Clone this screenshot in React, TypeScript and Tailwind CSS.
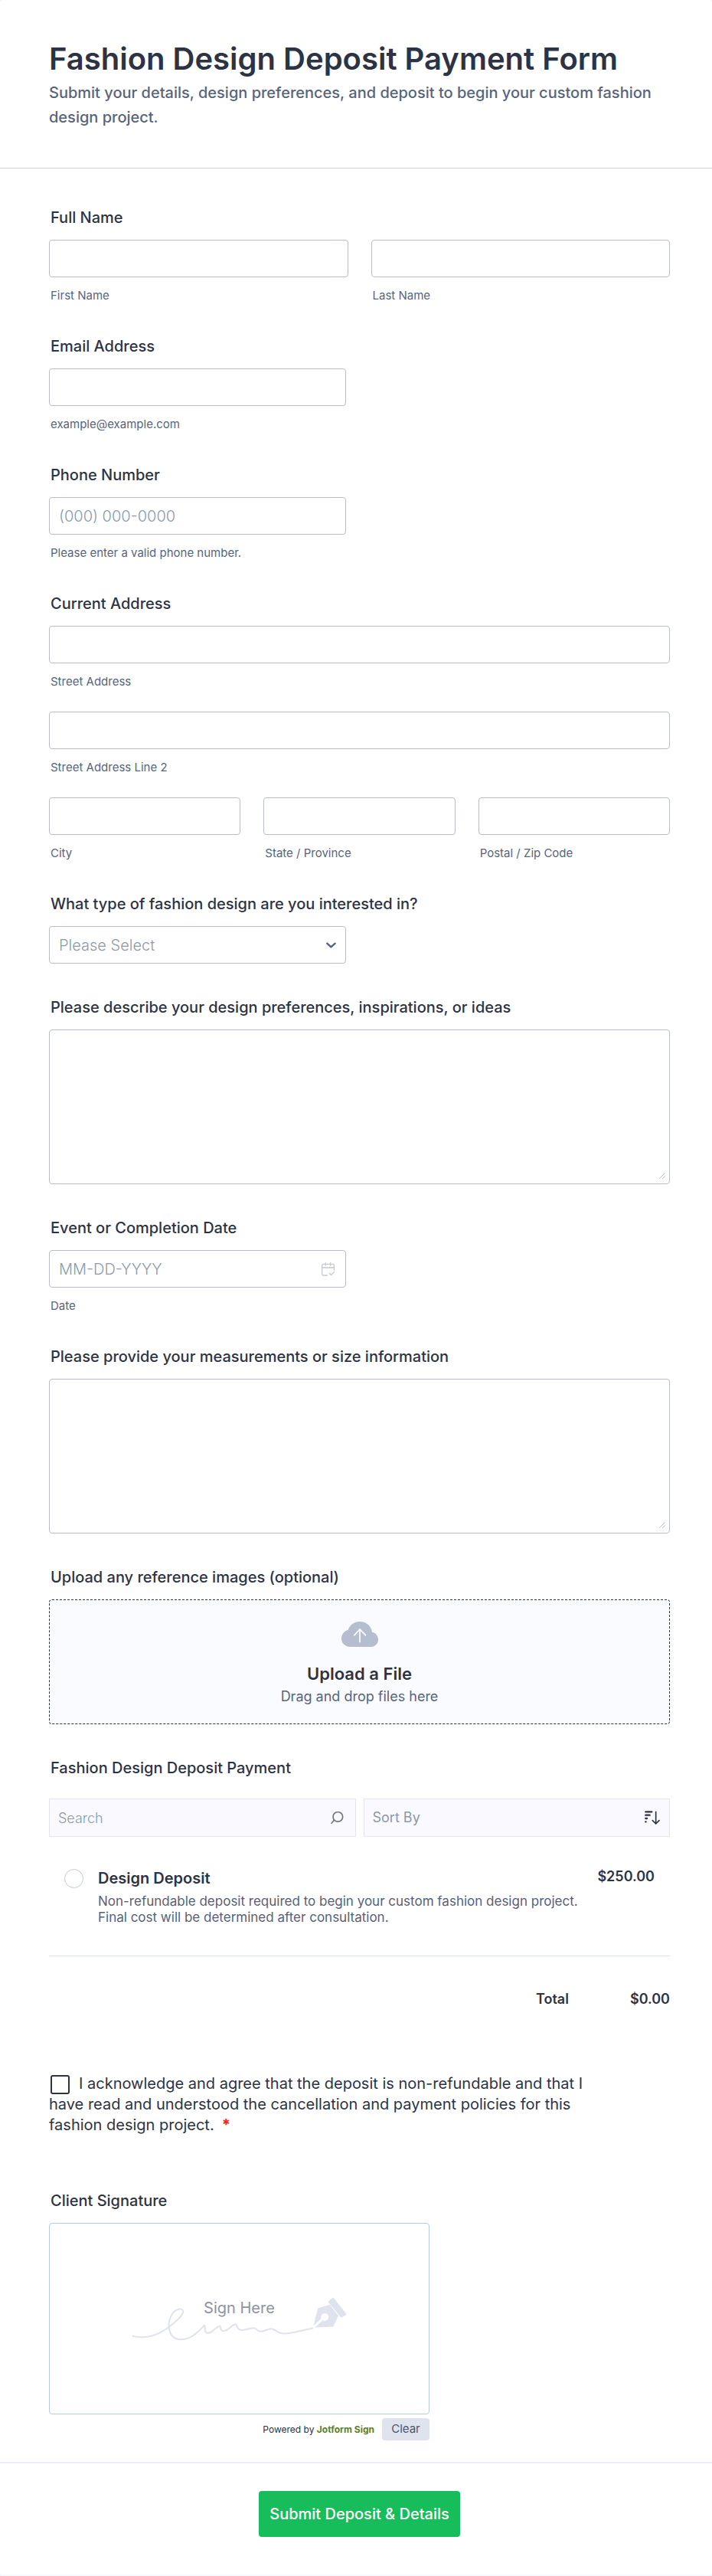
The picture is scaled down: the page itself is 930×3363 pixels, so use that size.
import { useState, type ReactNode } from "react";

const inputClass =
  "block h-[49px] w-full rounded border border-[#b8bdc9] bg-white px-3 text-xl leading-6 font-light text-[#2c3345] placeholder:text-[#8a9aab] focus:outline-none focus:ring-2 focus:ring-blue-200";

const labelClass = "mb-[17px] block px-0.5 text-xl leading-6 font-medium text-[#2c3345]";

function Question({ title, htmlFor, children }: { title: string; htmlFor: string; children: ReactNode }) {
  return (
    <div>
      <label htmlFor={htmlFor} className={labelClass}>
        {title}
      </label>
      {children}
    </div>
  );
}

// Several inputs under one heading (name, address).
function Group({ title, children }: { title: string; children: ReactNode }) {
  return (
    <fieldset>
      <legend className={labelClass}>{title}</legend>
      {children}
    </fieldset>
  );
}

function Hint({ htmlFor, children }: { htmlFor: string; children: ReactNode }) {
  return (
    <label htmlFor={htmlFor} className="mt-[15px] block px-0.5 text-[15px] leading-[18px] text-[#57647e]">
      {children}
    </label>
  );
}

function SubField({ id, label }: { id: string; label: string }) {
  return (
    <div>
      <input id={id} type="text" className={inputClass} />
      <Hint htmlFor={id}>{label}</Hint>
    </div>
  );
}

function TextArea({ id }: { id: string }) {
  return (
    <div className="relative">
      <textarea id={id} className={`${inputClass} h-[202px] resize-none py-3`} />
      <svg
        className="pointer-events-none absolute right-1.5 bottom-[7px] size-2"
        viewBox="0 0 8 8"
        stroke="#b8bdcf"
        strokeLinecap="round"
      >
        <path d="M0.5 7.5 7.5 0.5M4.5 7.5 7.5 4.5" />
      </svg>
    </div>
  );
}

function CalendarIcon() {
  return (
    <svg
      className="pointer-events-none absolute top-1/2 right-[15px] h-[18px] w-[17px] -translate-y-1/2"
      viewBox="0 0 51 54"
      fill="none"
      stroke="#c5c9d8"
      strokeWidth="4"
      strokeLinecap="round"
      strokeLinejoin="round"
    >
      <path d="M22 51H7a5 5 0 0 1-5-5V12a5 5 0 0 1 5-5h37a5 5 0 0 1 5 5v19M2 21h47" />
      <path d="M16 2v10M35 2v10M31 43l7 7 11-12" />
    </svg>
  );
}

function CloudIcon() {
  return (
    <svg className="h-[33px] w-12" viewBox="0 0 144 99" fill="none">
      <path
        d="M33 99C14 99 0 85 0 67c0-17 11-31 26-34C33 13 50 0 72 0c25 0 44 16 48 41 14 3 24 14 24 29 0 17-12 29-29 29H33Z"
        fill="#b4bece"
      />
      <path d="M72 82V30M49 55l23-25 24 25" stroke="#fff" strokeWidth="5" />
    </svg>
  );
}

function SearchIcon() {
  return (
    <svg
      className="pointer-events-none absolute top-1/2 right-4 size-[17px] -translate-y-1/2"
      viewBox="0 0 51 51"
      fill="none"
      stroke="#6f7487"
      strokeWidth="5"
      strokeLinecap="round"
    >
      <circle cx="28" cy="22" r="19" />
      <path d="M13 35 3 47" />
    </svg>
  );
}

function SortIcon() {
  return (
    <svg
      className="pointer-events-none absolute top-1/2 right-[13px] h-[18px] w-5 -translate-y-1/2"
      viewBox="0 0 60 54"
      fill="none"
      stroke="#2c3345"
      strokeWidth="7"
      strokeLinecap="round"
      strokeLinejoin="round"
    >
      <path d="M4 4h24M4 17h16M4 30h5M4 43h1" />
      <path d="M44 4v46M31 38l13 13 13-13" strokeWidth="5" />
    </svg>
  );
}

function SignatureArt() {
  return (
    <svg className="h-[57px] w-[282px]" viewBox="60 120 845 170" fill="none">
      <path
        d="M65 272c50 12 96-2 140-35 37-29 58-48 56-63-3-14-29-9-42 11-17 27-18 58-4 81 14 21 42 24 71 12 26-11 46-36 59-48 5-3-3 22 7 29 20 8 38-25 53-27 5 2 0 16 10 19 20 6 34-23 51-26 7 0 6 21 21 23 18 2 37-9 52-8 11 1 11 14 24 14 17 0 29-12 45-11 14 2 23 19 48 19 35 0 70-13 112-21"
        stroke="#dfe3ee"
        strokeWidth="6"
        strokeLinecap="round"
        strokeLinejoin="round"
      />
      <path d="M788 163l47-14 34 43-20 43-72 3 31-28a15 15 0 1 0-6-7l-30 28 16-68Z" fill="#dfe3ee" />
      <path d="M832 134l13-11q4-2 7 1l47 59q2 4-1 6l-14 9q-4 2-7-1l-47-57q-2-4 2-6Z" fill="#dfe3ee" />
    </svg>
  );
}

export default function App() {
  const [selected, setSelected] = useState(false);

  return (
    <main className="bg-[#f3f3fe] pb-px font-[Inter,sans-serif] text-[#2c3345]">
      <form className="rounded bg-white" onSubmit={(e) => e.preventDefault()}>
        <header className="border-b border-[#cdd3e3] pt-[52px] pr-[55px] pb-[50px] pl-16">
          <h1 className="text-[40px] leading-[49px] font-semibold">Fashion Design Deposit Payment Form</h1>
          <p className="mt-1 text-xl leading-8 font-medium text-[#57647e]">
            Submit your details, design preferences, and deposit to begin your custom fashion design project.
          </p>
        </header>

        <div className="flex flex-col gap-[45px] pt-[52px] pr-[55px] pb-7 pl-16">
          <Group title="Full Name">
            <div className="grid grid-cols-2 gap-[30px]">
              <SubField id="first-name" label="First Name" />
              <SubField id="last-name" label="Last Name" />
            </div>
          </Group>

          <Question title="Email Address" htmlFor="email">
            <input id="email" type="email" className={`${inputClass} max-w-[388px]`} />
            <Hint htmlFor="email">example@example.com</Hint>
          </Question>

          <Question title="Phone Number" htmlFor="phone">
            <input id="phone" type="tel" placeholder="(000) 000-0000" className={`${inputClass} max-w-[388px]`} />
            <Hint htmlFor="phone">Please enter a valid phone number.</Hint>
          </Question>

          <Group title="Current Address">
            <div className="flex flex-col gap-[30px]">
              <SubField id="street" label="Street Address" />
              <SubField id="street-2" label="Street Address Line 2" />
              <div className="grid grid-cols-3 gap-[30px]">
                <SubField id="city" label="City" />
                <SubField id="state" label="State / Province" />
                <SubField id="zip" label="Postal / Zip Code" />
              </div>
            </div>
          </Group>

          <Question title="What type of fashion design are you interested in?" htmlFor="design-type">
            <div className="relative max-w-[388px]">
              <select
                id="design-type"
                className="block h-[49px] w-full appearance-none rounded border border-[#b8bdc9] bg-white px-3 text-xl leading-6 font-light text-[#8a9aab] focus:outline-none"
              >
                <option value="">Please Select</option>
              </select>
              <svg
                className="pointer-events-none absolute top-1/2 right-[13px] h-2 w-[13px] -translate-y-1/2"
                viewBox="0 0 39 24"
                fill="none"
                stroke="#57607e"
                strokeWidth="7"
                strokeLinecap="round"
                strokeLinejoin="round"
              >
                <path d="M4 5l15 14L35 5" />
              </svg>
            </div>
          </Question>

          <Question title="Please describe your design preferences, inspirations, or ideas" htmlFor="preferences">
            <TextArea id="preferences" />
          </Question>

          <Question title="Event or Completion Date" htmlFor="event-date">
            <div className="relative max-w-[388px]">
              <input id="event-date" type="text" placeholder="MM-DD-YYYY" className={inputClass} />
              <CalendarIcon />
            </div>
            <Hint htmlFor="event-date">Date</Hint>
          </Question>

          <Question title="Please provide your measurements or size information" htmlFor="measurements">
            <TextArea id="measurements" />
          </Question>

          <Question title="Upload any reference images (optional)" htmlFor="reference-images">
            <label
              htmlFor="reference-images"
              className="relative flex h-[163px] cursor-pointer flex-col items-center rounded border border-dashed border-[#2c3345] bg-[#fafbff] pt-7"
            >
              <CloudIcon />
              <span className="mt-[21px] text-[22px] leading-7 font-semibold">Upload a File</span>
              <span className="mt-1 text-lg leading-6 text-[#57647e]">Drag and drop files here</span>
              <input id="reference-images" type="file" multiple className="sr-only" />
            </label>
          </Question>

          <fieldset>
            <legend className="mb-7 block px-0.5 text-xl leading-6 font-medium">Fashion Design Deposit Payment</legend>
            <div className="grid grid-cols-2 gap-2.5">
              <div className="relative">
                <input
                  type="text"
                  aria-label="Search products"
                  placeholder="Search"
                  className="block h-[50px] w-full border border-[#e3e5f0] bg-[#faf9ff] pr-10 pl-[11px] text-lg font-light placeholder:text-[#8a9aab] focus:outline-none"
                />
                <SearchIcon />
              </div>
              <div className="relative">
                <select
                  aria-label="Sort products"
                  className="block h-[50px] w-full appearance-none border border-[#e3e5f0] bg-[#faf9ff] pr-10 pl-[11px] text-lg text-[#8a9aab] focus:outline-none"
                >
                  <option>Sort By</option>
                </select>
                <SortIcon />
              </div>
            </div>

            <div className="flex items-start border-b border-[#dde3ed] px-5 pt-[42px] pb-[39px]">
              <input
                id="deposit"
                type="radio"
                checked={selected}
                onChange={() => setSelected(true)}
                className="size-[25px] shrink-0 appearance-none rounded-full border border-[#c3cad8] bg-white checked:border-8 checked:border-[#2e69ff]"
              />
              <label htmlFor="deposit" className="ml-[19px] flex-1">
                <span className="block text-xl leading-6 font-semibold">Design Deposit</span>
                <span className="mt-2 block text-[17px] leading-[21px] text-[#57607a]">
                  Non-refundable deposit required to begin your custom fashion design project. Final cost will be
                  determined after consultation.
                </span>
              </label>
              <span className="ml-4 text-lg leading-5 font-semibold">$250.00</span>
            </div>

            <div className="mt-11 flex justify-end gap-20 text-lg leading-6 font-semibold">
              <span>Total</span>
              <output>{selected ? "$250.00" : "$0.00"}</output>
            </div>
          </fieldset>

          <div className="mt-10 max-w-[712px] text-xl leading-[27px]">
            <input
              id="agree"
              type="checkbox"
              required
              className="-my-1 mr-3 ml-0.5 inline-block size-[25px] appearance-none rounded-[3px] border-2 border-[#2c3345] bg-white align-middle checked:bg-[#2e69ff]"
            />
            <label htmlFor="agree">
              I acknowledge and agree that the deposit is non-refundable and that I have read and understood the
              cancellation and payment policies for this fashion design project.
              <span className="ml-2.5 font-bold text-[#f5201a]">*</span>
            </label>
          </div>

          <section className="mt-7 max-w-[497px]">
            <h2 className={labelClass}>Client Signature</h2>
            <div className="flex h-[250px] items-center justify-center rounded border border-[#b5cbe3]">
              <div className="relative">
                <SignatureArt />
                <span className="absolute inset-x-0 top-0.5 text-center text-xl leading-6 text-[#8d93a5]">
                  Sign Here
                </span>
              </div>
            </div>
            <div className="mt-[5px] flex items-center justify-end gap-2.5">
              <p className="text-xs">
                Powered by <b className="text-[#5a8121]">Jotform Sign</b>
              </p>
              <button type="button" className="h-[29px] w-[62px] rounded bg-[#dfe3ee] text-[15px] text-[#4b5570]">
                Clear
              </button>
            </div>
          </section>
        </div>

        <footer className="flex justify-center border-t-2 border-[#ecedf6] pt-9 pr-[55px] pb-[50px] pl-16">
          <button type="submit" className="h-[60px] rounded bg-[#18bd5b] px-3.5 text-xl font-medium text-white">
            Submit Deposit &amp; Details
          </button>
        </footer>
      </form>
    </main>
  );
}
